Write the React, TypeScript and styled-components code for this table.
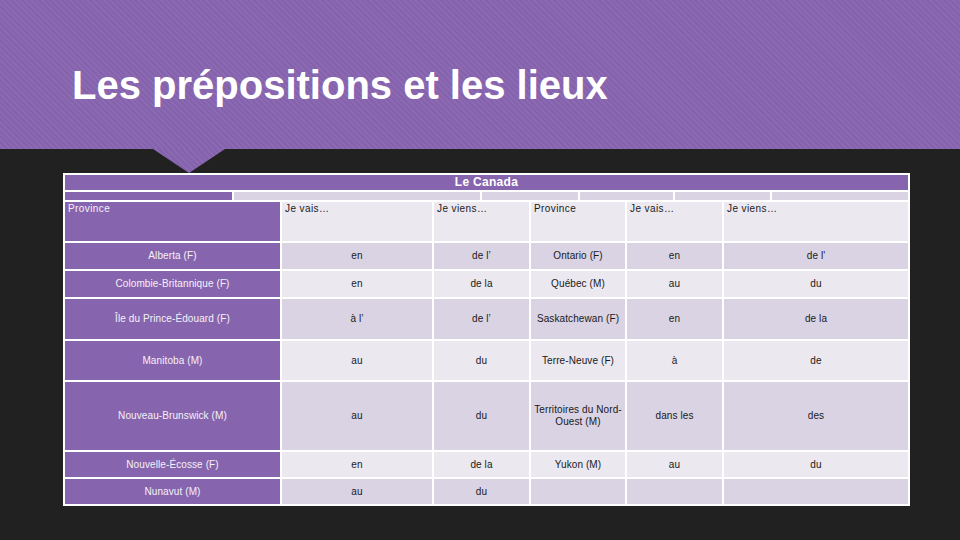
import React from "react";
import styled, { createGlobalStyle } from "styled-components";

const GlobalStyle = createGlobalStyle`
  html, body { margin: 0; padding: 0; }
  body {
    background: #212121;
    font-family: "Liberation Sans", Arial, sans-serif;
  }
  * { box-sizing: border-box; }
`;

const PURPLE = "#8764ae";
const LIGHT = "#ebe8f0";
const LILAC = "#d9d3e4";

const Page = styled.div`
  width: 960px;
  height: 540px;
  overflow: hidden;
  background: #212121;
`;

const stripes = `repeating-linear-gradient(45deg, #8562ac 0px, #8562ac 2px, #8c6ab3 2px, #8c6ab3 4px)`;

const Header = styled.header`
  position: relative;
  height: 149px;
  background: ${stripes};
  padding: 65px 0 0 72px;
`;

const Title = styled.h1`
  margin: 0;
  font-family: "Liberation Sans", Arial, sans-serif;
  font-weight: 700;
  font-size: 40px;
  line-height: 40px;
  color: #ffffff;
`;

const Pointer = styled.div`
  position: absolute;
  left: 153px;
  top: 149px;
  width: 72px;
  height: 24px;
  background: ${stripes};
  clip-path: polygon(0 0, 100% 0, 50% 100%);
`;

const Frame = styled.div`
  margin: 24px 0 0 63px;
  width: 847px;
  background: #ffffff;
  padding: 2px;
  display: flex;
  flex-direction: column;
  gap: 2px;
`;

const Caption = styled.div`
  height: 15px;
  background: ${PURPLE};
  color: #ffffff;
  font-weight: 700;
  font-size: 12px;
  letter-spacing: 0.3px;
  line-height: 15px;
  text-align: center;
`;

const SpacerRow = styled.div`
  display: grid;
  grid-template-columns: 167px 246px 96px 93px 95px 136px;
  gap: 2px;
  height: 8px;
`;

const Spacer = styled.div<{ $purple?: boolean }>`
  background: ${(p) => (p.$purple ? PURPLE : LILAC)};
`;

const Row = styled.div<{ $h: number }>`
  display: grid;
  grid-template-columns: 215px 150px 95px 94px 95px 184px;
  gap: 2px;
  height: ${(p) => p.$h}px;
`;

type Tone = "purple" | "light" | "lilac";

const Cell = styled.div<{ $tone: Tone; $head?: boolean }>`
  background: ${(p) => (p.$tone === "purple" ? PURPLE : p.$tone === "light" ? LIGHT : LILAC)};
  color: ${(p) => (p.$tone === "purple" ? "#f4f2f7" : "#1a1a1a")};
  font-size: 10px;
  letter-spacing: ${(p) => (p.$head ? "0.4px" : "0.1px")};
  line-height: 12px;
  display: flex;
  align-items: ${(p) => (p.$head ? "flex-start" : "center")};
  justify-content: ${(p) => (p.$head ? "flex-start" : "center")};
  text-align: ${(p) => (p.$head ? "left" : "center")};
  padding: ${(p) => (p.$head ? "1px 3px" : "0 2px")};
`;

const headers = ["Province", "Je vais…", "Je viens…", "Province", "Je vais…", "Je viens…"];

const rows: { h: number; tone: Tone; cells: string[] }[] = [
  { h: 26, tone: "lilac", cells: ["Alberta (F)", "en", "de l’", "Ontario (F)", "en", "de l'"] },
  { h: 26, tone: "light", cells: ["Colombie-Britannique (F)", "en", "de la", "Québec (M)", "au", "du"] },
  { h: 40, tone: "lilac", cells: ["Île du Prince-Édouard (F)", "à l’", "de l’", "Saskatchewan (F)", "en", "de la"] },
  { h: 39, tone: "light", cells: ["Manitoba (M)", "au", "du", "Terre-Neuve (F)", "à", "de"] },
  { h: 68, tone: "lilac", cells: ["Nouveau-Brunswick (M)", "au", "du", "Territoires du Nord-Ouest (M)", "dans les", "des"] },
  { h: 25, tone: "light", cells: ["Nouvelle-Écosse (F)", "en", "de la", "Yukon (M)", "au", "du"] },
  { h: 25, tone: "lilac", cells: ["Nunavut (M)", "au", "du", "", "", ""] },
];

export default function App() {
  return (
    <Page>
      <GlobalStyle />
      <Header>
        <Title>Les prépositions et les lieux</Title>
        <Pointer />
      </Header>
      <Frame>
        <Caption>Le Canada</Caption>
        <SpacerRow>
          <Spacer $purple />
          <Spacer />
          <Spacer />
          <Spacer />
          <Spacer />
          <Spacer />
        </SpacerRow>
        <Row $h={39}>
          {headers.map((t, i) => (
            <Cell key={i} $head $tone={i === 0 ? "purple" : "light"}>
              {t}
            </Cell>
          ))}
        </Row>
        {rows.map((r, ri) => (
          <Row key={ri} $h={r.h}>
            {r.cells.map((c, ci) => (
              <Cell key={ci} $tone={ci === 0 ? "purple" : r.tone}>
                {c}
              </Cell>
            ))}
          </Row>
        ))}
      </Frame>
    </Page>
  );
}
